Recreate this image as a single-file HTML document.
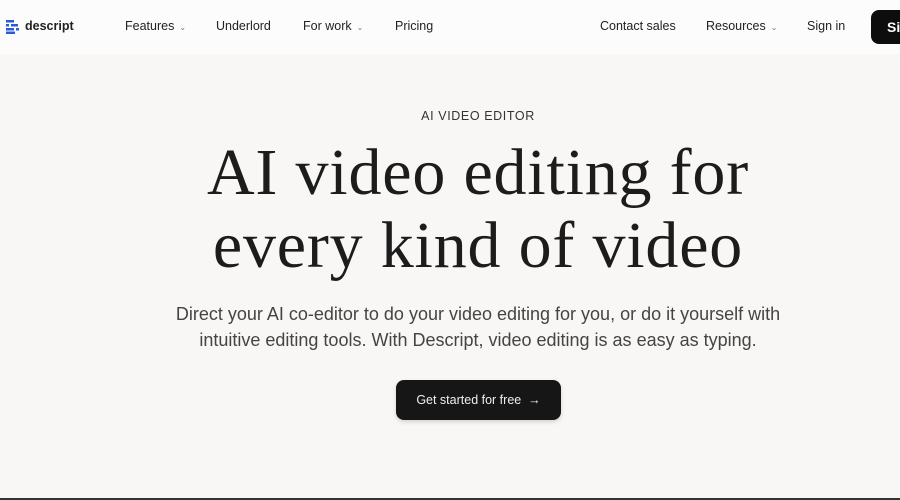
<!DOCTYPE html>
<html><head><style>
*{margin:0;padding:0;box-sizing:border-box}
body{width:900px;height:500px;overflow:hidden;background:#f8f7f5;font-family:"Liberation Sans",sans-serif;position:relative;color:#1a1a1a}
.hdr{position:absolute;top:0;left:0;width:900px;height:54px;background:#fcfcfc}
.n{position:absolute;top:19px;font-size:12.5px;color:#222}
.car{font-size:8px;color:#777;margin-left:5px}
.logo{position:absolute;left:6px;top:20px}
.btn{position:absolute;left:871px;top:10px;width:60px;height:34px;background:#0d0d0d;border-radius:8px;color:#fff;font-size:14px;font-weight:bold;padding:9px 0 0 16px}
.c{position:absolute;left:56px;width:844px;text-align:center}
.eyebrow{top:109px;font-size:12.5px;letter-spacing:.6px;color:#333}
h1{top:136px;font-family:"Liberation Serif",serif;font-weight:normal;font-size:66px;line-height:73px;letter-spacing:0.8px;color:#1c1c1c}
p{top:301px;font-size:18px;line-height:26px;color:#444}
.cta{position:absolute;left:396px;top:380px;width:165px;height:40px;background:#161616;border-radius:8px;color:#eee;font-size:12.5px;text-align:center;line-height:40px;box-shadow:0 2px 4px rgba(0,0,0,.15)}
.bl{position:absolute;left:0;top:498px;width:900px;height:2px;background:#333}
</style></head><body>
<div class="hdr">
<svg class="logo" width="14" height="14" viewBox="0 0 14 14"><g fill="#2a5bd7"><rect x="0" y="0" width="8" height="2.5"/><rect x="0" y="4" width="3" height="2.5"/><rect x="5" y="4" width="7" height="2.5"/><rect x="0" y="8" width="8" height="2.5"/><rect x="10" y="8" width="3" height="2.5"/><rect x="0" y="11.5" width="9" height="2.5"/></g></svg>
<div class="n" style="left:25px;font-weight:bold;font-size:12.5px">descript</div>
<div class="n" style="left:125px">Features<span class="car">&#8964;</span></div>
<div class="n" style="left:216px">Underlord</div>
<div class="n" style="left:303px">For work<span class="car">&#8964;</span></div>
<div class="n" style="left:395px">Pricing</div>
<div class="n" style="left:600px">Contact sales</div>
<div class="n" style="left:706px">Resources<span class="car">&#8964;</span></div>
<div class="n" style="left:807px">Sign in</div>
<div class="btn">Si</div>
</div>
<div class="c eyebrow">AI VIDEO EDITOR</div>
<h1 class="c">AI video editing for<br>every kind of video</h1>
<p class="c">Direct your AI co-editor to do your video editing for you, or do it yourself with<br>intuitive editing tools. With Descript, video editing is as easy as typing.</p>
<div class="cta">Get started for free &nbsp;&rarr;</div>
<div class="bl"></div>
</body></html>
